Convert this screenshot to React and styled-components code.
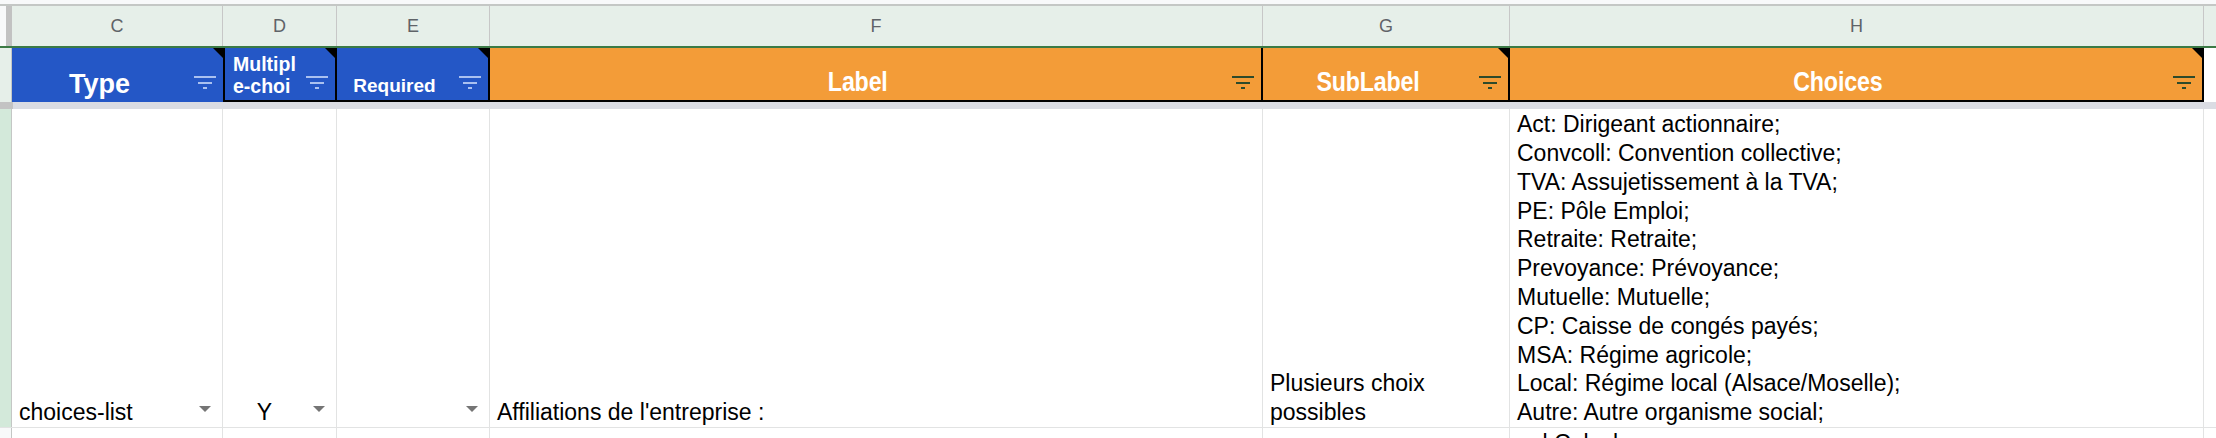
import styled, { createGlobalStyle } from "styled-components";

const GlobalStyle = createGlobalStyle`
  body {
    margin: 0;
    background: #ffffff;
    font-family: "Liberation Sans", Arial, sans-serif;
    overflow: hidden;
  }
`;

const COLS = "12px 211px 114px 153px 773px 247px 694px 1fr";

const Sheet = styled.div`
  width: 2216px;
  display: flex;
  flex-direction: column;
`;

const TopEdge = styled.div`
  height: 4px;
  background: #f8f9fa;
  border-bottom: 2px solid #c4c7c5;
`;

const Row = styled.div`
  display: grid;
  grid-template-columns: ${COLS};
  height: ${(p) => p.$h}px;
`;

const LetterRow = styled(Row)`
  background: #e6efe9;
  border-bottom: 2px solid #3b7a45;
`;

const Corner = styled.div`
  background: linear-gradient(to right, #f8f9fa 6px, #c2c2c2 6px);
`;

const Letter = styled.div`
  display: flex;
  align-items: center;
  justify-content: center;
  border-right: 1px solid #c7c7c7;
  color: #5f6368;
  font-size: 18px;
`;

const RowNum = styled.div`
  background: ${(p) => p.$bg || "#e6efe9"};
  border-right: 1px solid #c4c7c5;
`;

const HeadCell = styled.div`
  position: relative;
  display: flex;
  align-items: flex-end;
  justify-content: ${(p) => (p.$left ? "flex-start" : "center")};
  padding: 0 36px 3px ${(p) => (p.$left ? "8px" : "0")};
  background: ${(p) => (p.$tone === "blue" ? "#2457c6" : "#f39c38")};
  color: #ffffff;
  font-weight: bold;
  font-size: ${(p) => p.$size}px;
  line-height: ${(p) => (p.$size < 21 ? "22px" : "30px")};
  border-left: ${(p) => (p.$boxed ? "2px solid #000" : "0")};
  border-right: ${(p) => (p.$edge ? "2px solid #000" : "0")};
  border-bottom: ${(p) => (p.$base ? "2px solid #000" : "0")};
  overflow: hidden;
  white-space: ${(p) => (p.$left ? "pre" : "nowrap")};
`;

const Narrow = styled.span`
  display: inline-block;
  transform: scaleX(0.86);
  letter-spacing: -0.2px;
`;

const Note = styled.span`
  position: absolute;
  top: 0;
  right: 0;
  width: 0;
  height: 0;
  border-top: 10px solid #000;
  border-left: 10px solid transparent;
`;

const FilterSlot = styled.span`
  position: absolute;
  right: 7px;
  top: 28px;
  display: flex;
`;

const Divider = styled.div`
  height: 7px;
  background: linear-gradient(to right, #c3c3c3 13px, #dadce3 13px);
`;

const DataRow = styled(Row)`
  border-bottom: 1px solid #e2e3e3;
`;

const Cell = styled.div`
  position: relative;
  display: flex;
  align-items: ${(p) => (p.$top ? "flex-start" : "flex-end")};
  justify-content: ${(p) => (p.$center ? "center" : "flex-start")};
  padding: ${(p) => (p.$center ? "0 30px 0 0" : p.$top ? "1px 6px 0 7px" : "0 6px 0 7px")};
  border-right: 1px solid #e2e3e3;
  color: #000000;
  font-size: 23px;
  line-height: 28.8px;
  white-space: pre-line;
  overflow: hidden;
`;

const Arrow = styled.span`
  position: absolute;
  right: 11px;
  bottom: 15px;
  width: 0;
  height: 0;
  border-left: 6.5px solid transparent;
  border-right: 6.5px solid transparent;
  border-top: 6px solid #757575;
`;

const FilterIcon = ({ color }) => (
  <svg width="22" height="14" viewBox="0 0 22 14">
    <rect x="0" y="0" width="22" height="2" fill={color} />
    <rect x="4" y="6" width="14" height="2" fill={color} />
    <rect x="9" y="11" width="4" height="2" fill={color} />
  </svg>
);

const heads = [
  { text: "Type", tone: "blue", size: 27, note: true },
  { text: "Multipl\ne-choi", tone: "blue", size: 19.5, note: true, boxed: true, edge: true, base: true, left: true },
  { text: "Required", tone: "blue", size: 19, note: true, edge: true, base: true },
  { text: "Label", tone: "orange", size: 27, narrow: true, edge: true, base: true },
  { text: "SubLabel", tone: "orange", size: 27, narrow: true, note: true, edge: true, base: true },
  { text: "Choices", tone: "orange", size: 27, narrow: true, note: true, edge: true, base: true },
];

const choices = [
  "Act: Dirigeant actionnaire;",
  "Convcoll: Convention collective;",
  "TVA: Assujetissement à la TVA;",
  "PE: Pôle Emploi;",
  "Retraite: Retraite;",
  "Prevoyance: Prévoyance;",
  "Mutuelle: Mutuelle;",
  "CP: Caisse de congés payés;",
  "MSA: Régime agricole;",
  "Local: Régime local (Alsace/Moselle);",
  "Autre: Autre organisme social;",
];

const App = () => (
  <Sheet>
    <GlobalStyle />
    <TopEdge />
    <LetterRow $h={40}>
      <Corner />
      {["C", "D", "E", "F", "G", "H"].map((l) => (
        <Letter key={l}>{l}</Letter>
      ))}
      <div />
    </LetterRow>
    <Row $h={54}>
      <RowNum />
      {heads.map((h) => (
        <HeadCell
          key={h.text}
          $tone={h.tone}
          $size={h.size}
          $boxed={h.boxed}
          $edge={h.edge}
          $base={h.base}
          $left={h.left}
        >
          {h.narrow ? <Narrow>{h.text}</Narrow> : h.text}
          {h.note && <Note />}
          <FilterSlot>
            <FilterIcon color={h.tone === "blue" ? "#aac1f0" : "#2d4a2b"} />
          </FilterSlot>
        </HeadCell>
      ))}
      <div />
    </Row>
    <Divider />
    <DataRow $h={318}>
      <RowNum $bg="#d3e9da" />
      <Cell>
        choices-list
        <Arrow />
      </Cell>
      <Cell $center>
        Y
        <Arrow />
      </Cell>
      <Cell>
        <Arrow />
      </Cell>
      <Cell>Affiliations de l'entreprise :</Cell>
      <Cell>{"Plusieurs choix\npossibles"}</Cell>
      <Cell>{choices.join("\n")}</Cell>
      <div />
    </DataRow>
    <Row $h={40}>
      <RowNum $bg="#f8f9fa" />
      <Cell />
      <Cell />
      <Cell />
      <Cell />
      <Cell />
      <Cell $top>ual Calcul;</Cell>
      <div />
    </Row>
  </Sheet>
);

export default App;
